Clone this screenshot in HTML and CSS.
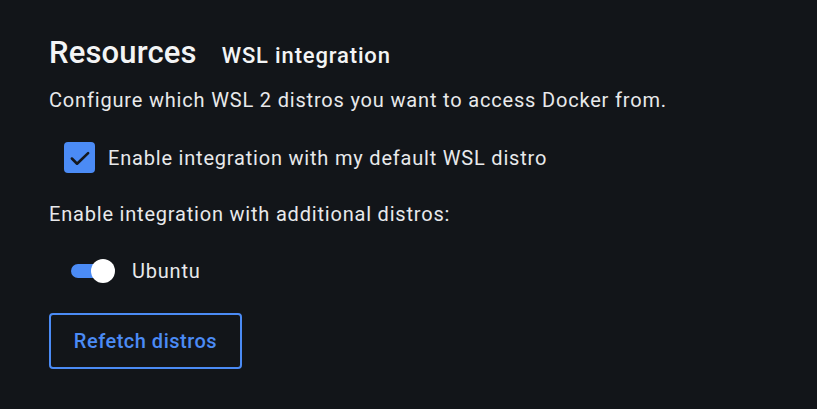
FILE: index.html
```html
<!DOCTYPE html>
<html lang="en">
<head>
<meta charset="utf-8">
<title>WSL integration</title>
<link rel="stylesheet" href="styles.css">
</head>
<body>
<main class="page">
  <header class="title">
    <h1 class="title-main">Resources</h1>
    <h2 class="title-sub">WSL integration</h2>
  </header>
  <p class="desc">Configure which WSL 2 distros you want to access Docker from.</p>
  <label class="check-row">
    <span class="checkbox">
      <svg viewBox="0 0 24 24" width="26" height="26"><path d="M4.5 12.5l4.8 4.8L19.5 7.5" fill="none" stroke="#15181d" stroke-width="2.4" stroke-linecap="round" stroke-linejoin="round"/></svg>
    </span>
    <span class="check-label">Enable integration with my default WSL distro</span>
  </label>
  <p class="sub-label">Enable integration with additional distros:</p>
  <div class="toggle-row">
    <span class="toggle"><span class="toggle-track"></span><span class="toggle-thumb"></span></span>
    <span class="toggle-label">Ubuntu</span>
  </div>
  <button class="btn-outline" type="button">Refetch distros</button>
</main>
</body>
</html>
```

FILE: styles.css
```css
html, body {
  margin: 0;
  padding: 0;
  background: #121519;
}
body {
  font-family: Roboto, "Liberation Sans", sans-serif;
  color: #e8e9eb;
  width: 817px;
  height: 409px;
  overflow: hidden;
}
.page {
  padding: 35px 0 0 49px;
}
.title {
  display: flex;
  align-items: baseline;
  gap: 25px;
  height: 36px;
}
.title-main {
  margin: 0;
  font-size: 31px;
  line-height: 36px;
  font-weight: 500;
  color: #f3f4f5;
  letter-spacing: 0.15px;
}
.title-sub {
  margin: 0;
  font-size: 22px;
  line-height: 36px;
  font-weight: 500;
  color: #f3f4f5;
  letter-spacing: 0.85px;
}
.desc {
  margin: 17px 0 0;
  font-size: 20px;
  line-height: 24px;
  letter-spacing: 0.82px;
}
.check-row {
  display: flex;
  align-items: center;
  gap: 13px;
  margin: 30px 0 0 15px;
  height: 31px;
}
.checkbox {
  width: 31px;
  height: 31px;
  border-radius: 4px;
  background: #4b8bf5;
  display: flex;
  align-items: center;
  justify-content: center;
}
.check-label {
  font-size: 20px;
  line-height: 24px;
  letter-spacing: 0.8px;
}
.sub-label {
  margin: 29px 0 0;
  font-size: 20px;
  line-height: 24px;
  letter-spacing: 0.8px;
}
.toggle-row {
  display: flex;
  align-items: center;
  gap: 17px;
  margin: 33px 0 0 22px;
  height: 24px;
}
.toggle {
  position: relative;
  width: 44px;
  height: 24px;
  display: flex;
  align-items: center;
}
.toggle-track {
  width: 40px;
  height: 14px;
  border-radius: 7px;
  background: #4b8bf5;
}
.toggle-thumb {
  position: absolute;
  left: 20px;
  top: 0;
  width: 24px;
  height: 24px;
  border-radius: 50%;
  background: #ffffff;
}
.toggle-label {
  font-size: 20px;
  line-height: 24px;
  letter-spacing: 0.8px;
}
.btn-outline {
  display: block;
  margin-top: 30px;
  width: 193px;
  height: 56px;
  border: 2px solid #4b8bf5;
  border-radius: 4px;
  background: transparent;
  color: #4b8bf5;
  font-family: Roboto, "Liberation Sans", sans-serif;
  font-size: 20px;
  font-weight: 500;
  letter-spacing: 0.5px;
  padding: 0;
  cursor: pointer;
}
```
